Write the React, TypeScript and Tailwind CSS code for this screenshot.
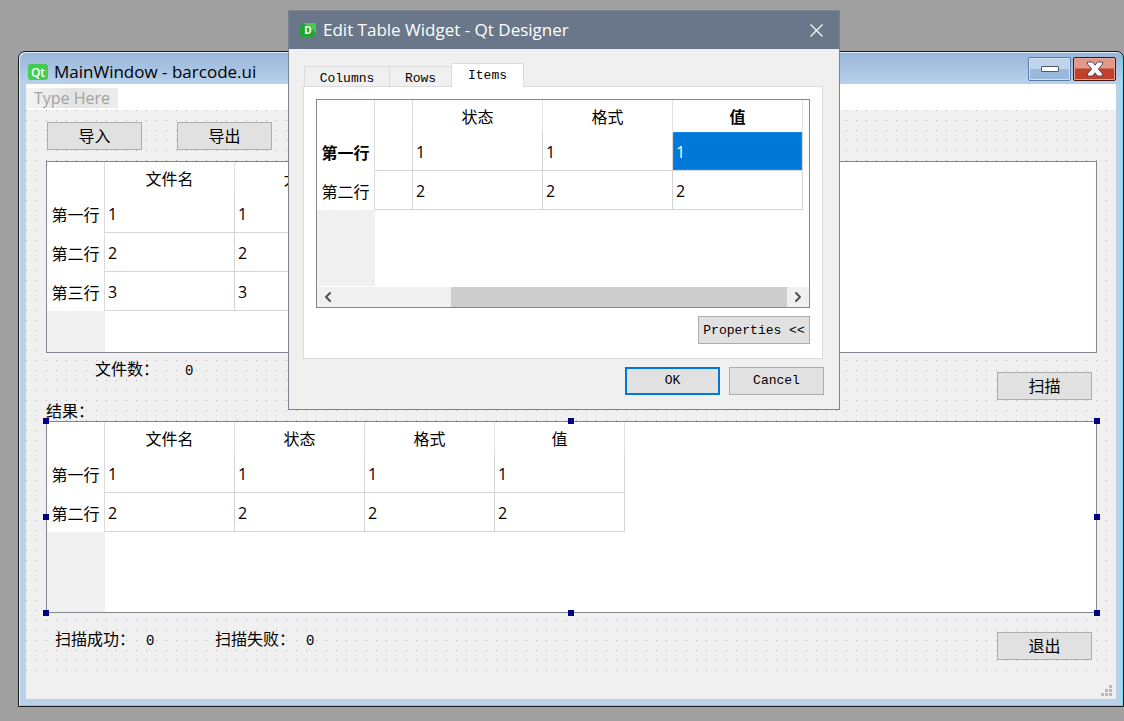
import { ReactNode } from "react";
import { ChevronLeft, ChevronRight } from "lucide-react";

interface Row {
  title: string;
  cells: string[];
}

interface DataTableProps {
  label: string;
  columns: string[];
  rows: Row[];
  children?: ReactNode;
}

const files = {
  columns: ["文件名", "大小"],
  rows: [
    { title: "第一行", cells: ["1", "1"] },
    { title: "第二行", cells: ["2", "2"] },
    { title: "第三行", cells: ["3", "3"] },
  ],
};

const results = {
  columns: ["文件名", "状态", "格式", "值"],
  rows: [
    { title: "第一行", cells: ["1", "1", "1", "1"] },
    { title: "第二行", cells: ["2", "2", "2", "2"] },
  ],
};

const editColumns = ["状态", "格式", "值"];

const DataTable = ({ label, columns, rows, children }: DataTableProps) => (
  <div className="relative flex h-48 flex-col border border-[#828790] bg-white">
    <table aria-label={label} className="w-max table-fixed border-separate border-spacing-0">
      <thead>
        <tr className="h-8">
          <td className="w-[58px] border-r border-[#dcdcdc]" />
          {columns.map((column) => (
            <th key={column} scope="col" className="w-[130px] border-r border-[#e2e2e2] pt-0.5 font-normal">
              {column}
            </th>
          ))}
        </tr>
      </thead>
      <tbody>
        {rows.map((row) => (
          <tr key={row.title} className="h-[39px]">
            <th scope="row" className="border-r border-[#dcdcdc] pt-0.5 text-center font-normal">
              {row.title}
            </th>
            {row.cells.map((cell, i) => (
              <td key={i} className="border-r border-b border-[#d4d4d4] px-[3px] pt-0.5">
                {cell}
              </td>
            ))}
          </tr>
        ))}
      </tbody>
    </table>
    <div className="w-[58px] flex-1 bg-[#f0f0f0]" />
    {children}
  </div>
);

const FormButton = ({ children }: { children: ReactNode }) => (
  <button type="button" className="h-7 w-[95px] shrink-0 border border-[#adadad] bg-[#e1e1e1]">
    {children}
  </button>
);

// The eight grips around the selected widget
const Handles = () => (
  <>
    <i className="absolute -top-1 -left-1 size-1.5 bg-[#000080]" />
    <i className="absolute -top-1 left-1/2 -ml-1 size-1.5 bg-[#000080]" />
    <i className="absolute -top-1 -right-1 size-1.5 bg-[#000080]" />
    <i className="absolute top-1/2 -left-1 -mt-[3px] size-1.5 bg-[#000080]" />
    <i className="absolute top-1/2 -right-1 -mt-[3px] size-1.5 bg-[#000080]" />
    <i className="absolute -bottom-1 -left-1 size-1.5 bg-[#000080]" />
    <i className="absolute -bottom-1 left-1/2 -ml-1 size-1.5 bg-[#000080]" />
    <i className="absolute -right-1 -bottom-1 size-1.5 bg-[#000080]" />
  </>
);

const MainWindow = () => (
  <main className="rounded-t-[7px] border border-[#1a1a1a] bg-[#b9d1ea] bg-linear-to-b from-[#97b4d9] to-[#b9d1ea] to-[32px] px-[7px] pb-[7px] shadow-[inset_1px_1px_0_#e4eefa,inset_-1px_-1px_0_#5fd6f2]">
    <header className="flex h-8 items-center pl-0.5">
      <div className="flex flex-1 items-center pt-2">
        <span className="flex h-4 w-5 items-center justify-center rounded-[3px] bg-[#41cd52] pt-px text-[12px] leading-none font-semibold text-white">
          Qt
        </span>
        <h1 className="pl-1.5 text-[17px] leading-6">MainWindow - barcode.ui</h1>
      </div>
      <div className="flex gap-0.5 pt-0.5">
        <button
          type="button"
          aria-label="Minimize"
          className="flex h-6 w-[43px] items-center justify-center rounded-[2px] border border-[#5b7ea8] bg-linear-to-b from-[#bfd4ec] from-50% to-[#9ab8dc] to-50% shadow-[inset_0_0_0_1px_#d3e2f3]"
        >
          <span className="h-1.5 w-[18px] rounded-[1px] border border-[#535666] bg-white" />
        </button>
        <button
          type="button"
          aria-label="Close"
          className="flex h-6 w-[43px] items-center justify-center rounded-[2px] border border-[#4b1511] bg-linear-to-b from-[#e09a8c] from-45% to-[#c0402b] to-50% shadow-[inset_0_0_0_1px_#e8a698]"
        >
          <svg viewBox="0 0 18 16" className="h-4 w-[18px]">
            <path d="M1.5 1 H6.5 L9 4.2 L11.5 1 H16.5 V3 L12.4 8 L16.5 13 V15 H11.5 L9 11.8 L6.5 15 H1.5 V13 L5.6 8 L1.5 3 Z" fill="#fff" stroke="#5a4a58" strokeWidth="1" strokeLinejoin="round" />
          </svg>
        </button>
      </div>
    </header>

    <nav className="flex h-[26px] items-start bg-white pt-1">
      <button
        type="button"
        className="h-5 bg-linear-to-r from-[#f4f4f4] via-[#e4e4e4] to-[#ececec] px-2 text-[16px] leading-5 text-[#a3a3a3]"
      >
        Type Here
      </button>
    </nav>

    <section className="bg-[#f0f0f0]">
      <div className="h-[562px] bg-[conic-gradient(from_270deg_at_1px_1px,#b0b0b0_90deg,transparent_0)] bg-size-[10px_10px] pt-3 pr-[19px] pl-5">
        <div className="mb-[11px] flex gap-[35px] pl-px">
          <FormButton>导入</FormButton>
          <FormButton>导出</FormButton>
        </div>
        <DataTable label="文件" columns={files.columns} rows={files.rows} />

        <div className="flex h-[68px] justify-between pr-[5px]">
          <div className="pt-1">
            <p className="flex gap-[26px] pl-[49px] leading-6">
              <span>文件数：</span>
              <span className="pt-0.5 font-[Liberation_Mono] text-[14px]">0</span>
            </p>
            <h2 className="pt-4 leading-6">结果：</h2>
          </div>
          <div className="pt-[19px]">
            <FormButton>扫描</FormButton>
          </div>
        </div>

        <DataTable label="结果" columns={results.columns} rows={results.rows}>
          <Handles />
        </DataTable>

        <div className="flex justify-between pr-[5px]">
          <p className="flex pt-[14px] pl-[9px] leading-6">
            <span className="w-[91px]">扫描成功：</span>
            <span className="w-[69px] pt-0.5 font-[Liberation_Mono] text-[14px]">0</span>
            <span className="w-[91px]">扫描失败：</span>
            <span className="pt-0.5 font-[Liberation_Mono] text-[14px]">0</span>
          </p>
          <div className="pt-[19px]">
            <FormButton>退出</FormButton>
          </div>
        </div>
      </div>
      <footer className="flex h-[27px] items-end justify-end pr-[3px] pb-0.5">
        <svg viewBox="0 0 12 12" className="size-3" fill="#bfb8b2">
          <path d="M8 0h3v3h-3z M4 4h3v3h-3z M8 4h3v3h-3z M0 8h3v3h-3z M4 8h3v3h-3z M8 8h3v3h-3z" />
        </svg>
      </footer>
    </section>
  </main>
);

const EditDialog = () => (
  <div
    role="dialog"
    aria-labelledby="dialog-title"
    className="absolute top-[10px] left-[288px] w-[552px] border border-[#7c8490] bg-[#f0f0f0] pb-[14px]"
  >
    <header className="flex h-[38px] items-center bg-[#6a778a] pr-4 pl-[11px] text-white">
      <svg viewBox="0 0 16 14" className="h-[14px] w-4">
        <path d="M3 0 H16 V11 L13 14 H0 V3 Z" fill="#21a336" />
        <path d="M3 0 H16 V11 L13 7 Z" fill="#41cd52" />
        <text x="8" y="10.5" textAnchor="middle" fill="#fff" fontSize="10" fontWeight="700">
          D
        </text>
      </svg>
      <h2 id="dialog-title" className="flex-1 pl-[7px] text-[17px]">
        Edit Table Widget - Qt Designer
      </h2>
      <button type="button" aria-label="Close dialog">
        <svg viewBox="0 0 13 13" className="size-[13px]">
          <path d="M0.5 0.5 L12.5 12.5 M12.5 0.5 L0.5 12.5" stroke="#fff" strokeWidth="1.2" />
        </svg>
      </button>
    </header>

    <div className="pt-[14px] pr-4 pl-[14px]">
      <div role="tablist" className="relative -mb-px flex h-6 items-end pl-px font-[Liberation_Mono] text-[13px]">
        <button type="button" role="tab" className="h-[21px] w-[85px] border border-r-0 border-[#dcdcdc]">
          Columns
        </button>
        <button type="button" role="tab" className="h-[21px] w-[62px] border border-r-0 border-[#dcdcdc]">
          Rows
        </button>
        <button
          type="button"
          role="tab"
          aria-selected="true"
          className="h-6 w-[73px] border border-b-0 border-[#dcdcdc] bg-white"
        >
          Items
        </button>
      </div>

      <div className="border border-[#dcdcdc] bg-white px-3 pt-3 pb-[14px]">
        <div className="flex h-[209px] flex-col border border-[#828790]">
          <table aria-label="Items" className="w-[486px] table-fixed border-separate border-spacing-0">
            <thead>
              <tr className="h-8">
                <td className="w-[58px] border-r border-[#dcdcdc]" />
                <td className="w-[38px] border-r border-[#dcdcdc]" />
                {editColumns.map((column) => (
                  <th
                    key={column}
                    scope="col"
                    className={`border-r border-[#e2e2e2] pt-0.5 ${column === "值" ? "font-bold" : "font-normal"}`}
                  >
                    {column}
                  </th>
                ))}
              </tr>
            </thead>
            <tbody>
              <tr className="h-[39px]">
                <th scope="row" className="border-r border-[#dcdcdc] pt-0.5 text-center font-bold">
                  第一行
                </th>
                <td className="border-r border-b border-[#d4d4d4]" />
                <td className="border-r border-b border-[#d4d4d4] px-[3px] pt-0.5">1</td>
                <td className="border-r border-b border-[#d4d4d4] px-[3px] pt-0.5">1</td>
                <td className="border-r border-b border-[#d4d4d4]">
                  <div className="flex h-[38px] items-center border border-dotted border-[#b0783c] bg-[#0078d7] px-0.5 pt-0.5 text-white">
                    1
                  </div>
                </td>
              </tr>
              <tr className="h-[39px]">
                <th scope="row" className="border-r border-[#dcdcdc] pt-0.5 text-center font-normal">
                  第二行
                </th>
                <td className="border-r border-b border-[#d4d4d4]" />
                <td className="border-r border-b border-[#d4d4d4] px-[3px] pt-0.5">2</td>
                <td className="border-r border-b border-[#d4d4d4] px-[3px] pt-0.5">2</td>
                <td className="border-r border-b border-[#d4d4d4] px-[3px] pt-0.5">2</td>
              </tr>
            </tbody>
          </table>
          <div className="mb-px w-[58px] flex-1 bg-[#f0f0f0]" />
          <div className="flex h-5 bg-[#f0f0f0] text-[#505050]">
            <button type="button" aria-label="Scroll left" className="flex w-[22px] items-center justify-center">
              <ChevronLeft className="size-4" strokeWidth={3} />
            </button>
            <div className="flex flex-1 justify-end">
              <div className="w-3/4 bg-[#cdcdcd]" />
            </div>
            <button type="button" aria-label="Scroll right" className="flex w-[22px] items-center justify-center">
              <ChevronRight className="size-4" strokeWidth={3} />
            </button>
          </div>
        </div>
        <div className="flex justify-end pt-2">
          <button
            type="button"
            className="h-7 w-[112px] border border-[#adadad] bg-[#e1e1e1] pt-0.5 font-[Liberation_Mono] text-[13px]"
          >
            Properties &lt;&lt;
          </button>
        </div>
      </div>

      <div className="-mr-px flex justify-end gap-[9px] pt-2 font-[Liberation_Mono] text-[13px]">
        <button type="button" className="h-7 w-[95px] border-2 border-[#0078d7] bg-[#e1e1e1]">
          OK
        </button>
        <FormButton>Cancel</FormButton>
      </div>
    </div>
  </div>
);

const App = () => (
  <div className="relative min-h-screen bg-[#a0a0a0] pt-[51px] pl-[18px] font-['Open_Sans','Noto_Sans_CJK_SC',sans-serif] text-[16px] leading-6 text-black">
    <MainWindow />
    <EditDialog />
  </div>
);

export default App;
